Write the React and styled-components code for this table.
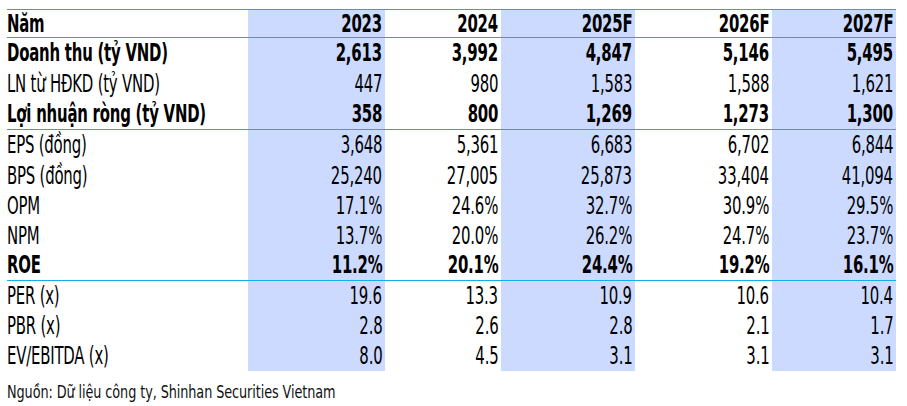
import React from "react";
import styled, { createGlobalStyle } from "styled-components";

const Global = createGlobalStyle`
  html, body { margin: 0; padding: 0; background: #ffffff; }
  body { font-family: "DejaVu Sans Condensed", "DejaVu Sans", sans-serif; color: #000; }
`;

const Page = styled.div`
  padding: 9px 0 0 7px;
  width: 907px;
  height: 406px;
  box-sizing: border-box;
`;

const Table = styled.table`
  border-collapse: collapse;
  table-layout: fixed;
  width: 889px;
  font-family: "DejaVu Sans Condensed", "DejaVu Sans", sans-serif;
  font-size: 24px;
  letter-spacing: -0.3px;
`;

const Row = styled.tr`
  height: ${(p) => p.$h}px;
  font-weight: ${(p) => (p.$bold ? 700 : 400)};
  border-top: ${(p) => (p.$sep ? "1px solid #12aee8" : "none")};
`;

const Label = styled.td`
  padding: 0;
  text-align: left;
  white-space: nowrap;
  vertical-align: middle;
  line-height: 1;
`;

const Cell = styled.td`
  padding: 0 3px 0 0;
  text-align: right;
  white-space: nowrap;
  vertical-align: middle;
  line-height: 1;
  background: ${(p) => (p.$shade ? "#ccdaff" : "transparent")};
`;

const Narrow = styled.span`
  display: inline-block;
  transform: scaleX(0.69);
  transform-origin: ${(p) => (p.$left ? "left" : "right")} center;
`;

const Source = styled.div`
  font-family: "DejaVu Sans Condensed", "DejaVu Sans", sans-serif;
  font-size: 17.5px;
  color: #111;
  padding-top: 11px;
  letter-spacing: -0.1px;
  white-space: nowrap;
  transform: scaleX(0.815);
  transform-origin: left center;
`;

const widths = [241, 137, 116, 134, 137, 124];
const shaded = [false, true, false, true, false, true];

const rows = [
  { label: "Năm", vals: ["2023", "2024", "2025F", "2026F", "2027F"], bold: true, h: 28, sep: true },
  { label: "Doanh thu (tỷ VND)", vals: ["2,613", "3,992", "4,847", "5,146", "5,495"], bold: true, h: 31, sep: true },
  { label: "LN từ HĐKD (tỷ VND)", vals: ["447", "980", "1,583", "1,588", "1,621"], h: 30 },
  { label: "Lợi nhuận ròng (tỷ VND)", vals: ["358", "800", "1,269", "1,273", "1,300"], bold: true, h: 31 },
  { label: "EPS (đồng)", vals: ["3,648", "5,361", "6,683", "6,702", "6,844"], h: 31, sep: true },
  { label: "BPS (đồng)", vals: ["25,240", "27,005", "25,873", "33,404", "41,094"], h: 30 },
  { label: "OPM", vals: ["17.1%", "24.6%", "32.7%", "30.9%", "29.5%"], h: 30 },
  { label: "NPM", vals: ["13.7%", "20.0%", "26.2%", "24.7%", "23.7%"], h: 30 },
  { label: "ROE", vals: ["11.2%", "20.1%", "24.4%", "19.2%", "16.1%"], bold: true, h: 30 },
  { label: "PER (x)", vals: ["19.6", "13.3", "10.9", "10.6", "10.4"], h: 30, sep: true },
  { label: "PBR (x)", vals: ["2.8", "2.6", "2.8", "2.1", "1.7"], h: 30 },
  { label: "EV/EBITDA (x)", vals: ["8.0", "4.5", "3.1", "3.1", "3.1"], h: 30 },
];

export default function App() {
  return (
    <Page>
      <Global />
      <Table>
        <colgroup>
          {widths.map((w, i) => (
            <col key={i} style={{ width: w }} />
          ))}
        </colgroup>
        <tbody>
          {rows.map((r) => (
            <Row key={r.label} $bold={r.bold} $h={r.h} $sep={r.sep}>
              <Label>
                <Narrow $left>{r.label}</Narrow>
              </Label>
              {r.vals.map((v, i) => (
                <Cell key={i} $shade={shaded[i + 1]}>
                  <Narrow>{v}</Narrow>
                </Cell>
              ))}
            </Row>
          ))}
        </tbody>
      </Table>
      <Source>Nguồn: Dữ liệu công ty, Shinhan Securities Vietnam</Source>
    </Page>
  );
}
